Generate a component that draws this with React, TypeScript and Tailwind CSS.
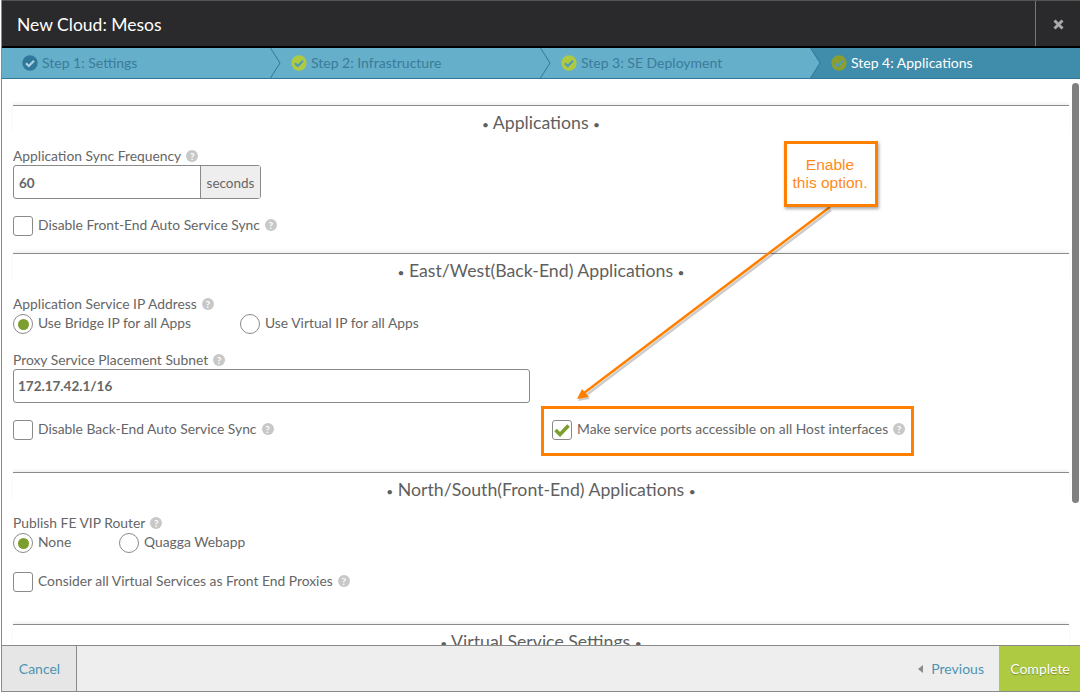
import type { ReactNode } from 'react';

const steps = [
  { label: 'Step 1: Settings', circle: '#2f7899', check: '#a9d3e4', pad: 'pl-[20px]' },
  { label: 'Step 2: Infrastructure', circle: '#aec942', check: '#4f9cba', pad: 'pl-[20px]' },
  { label: 'Step 3: SE Deployment', circle: '#aec942', check: '#4f9cba', pad: 'pl-[20px]' },
];

function StepIcon({ circle, check }: { circle: string; check: string }) {
  return (
    <svg width="16" height="16" viewBox="0 0 16 16" className="shrink-0">
      <circle cx="8" cy="8" r="7.7" fill={circle} />
      <path d="M4 8.2l2.8 2.8L12 5.8" fill="none" stroke={check} strokeWidth="2.2" />
    </svg>
  );
}

function Chevron({ filled }: { filled?: boolean }) {
  return (
    <svg width="12" height="30" viewBox="0 0 12 30" className="absolute right-[-11px] top-0 z-10">
      <path d="M0.5 0L10 15L0.5 30" fill={filled ? '#66afcb' : 'none'} stroke="#2f7899" strokeWidth="1" />
    </svg>
  );
}

function Help() {
  return (
    <span className="ml-[5px] inline-flex h-[12px] w-[12px] items-center justify-center rounded-full bg-[#c8c8c8] text-[10px] font-bold leading-none text-white">
      ?
    </span>
  );
}

function Section({ title, className, children }: { title: string; className: string; children?: ReactNode }) {
  return (
    <section className={className}>
      <div className="border-t border-[#8a8a8a] shadow-[0_-2px_3px_rgba(0,0,0,0.06)]">
        <h2 className="pt-[6px] text-center text-[17.7px] leading-[22px] text-[#5f5f5f]">
          <span className="text-[12px] leading-none">•</span> {title} <span className="text-[12px] leading-none">•</span>
        </h2>
      </div>
      {children}
    </section>
  );
}

function Checkbox({ label, checked }: { label: string; checked?: boolean }) {
  return (
    <label className="flex h-[20px] items-center text-[13.85px] text-[#666]">
      <span className="mr-[5px] flex h-[20px] w-[20px] shrink-0 items-center justify-center rounded-[3px] border border-[#8a8a8a] bg-white">
        {checked && (
          <svg width="16" height="14" viewBox="0 0 16 14">
            <path d="M1.5 7L6 11.5L14.5 2.5" fill="none" stroke="#7b9e2e" strokeWidth="3.6" />
          </svg>
        )}
      </span>
      <span className="flex items-center pb-[2px]">
        {label}
        <Help />
      </span>
    </label>
  );
}

function Radio({ label, checked, className }: { label: string; checked?: boolean; className?: string }) {
  return (
    <label className={`flex h-[20px] items-center text-[13.85px] text-[#666] ${className ?? ''}`}>
      <span className="mr-[5px] flex h-[20px] w-[20px] shrink-0 items-center justify-center rounded-full border border-[#8a8a8a] bg-white">
        {checked && <span className="h-[11px] w-[11px] rounded-full bg-[#7b9e2e]" />}
      </span>
      <span className="pb-[2px]">{label}</span>
    </label>
  );
}

function FieldLabel({ children }: { children: ReactNode }) {
  return (
    <div className="flex h-[18px] items-center text-[13.85px] leading-[18px] text-[#666]">
      {children}
      <Help />
    </div>
  );
}

export default function App() {
  return (
    <div className="relative h-[693px] w-[1080px] overflow-hidden bg-white pl-[1px] font-['Lato','Open_Sans',sans-serif]">
      <div className="flex h-[692px] flex-col border-b border-l border-[#8a8a8a]">
        {/* header */}
        <header className="flex h-[48px] shrink-0 items-stretch border-t border-[#555] border-b-2 border-b-black bg-[#2a2a2c]">
          <h1 className="flex-1 pl-[15px] pt-[12px] text-[17.5px] leading-[24px] text-white">New Cloud: Mesos</h1>
          <div className="flex w-[45px] items-center justify-center border-l border-[#777] pt-[2px]">
            <svg width="11" height="11" viewBox="0 0 11 11">
              <path d="M1.5 1.5L9.5 9.5M9.5 1.5L1.5 9.5" stroke="#a9a9a9" strokeWidth="3" />
            </svg>
          </div>
        </header>

        {/* steps */}
        <nav className="flex h-[31px] shrink-0 border-b border-[#2f7899] bg-[#66afcb] text-[14px]">
          {steps.map((s, i) => (
            <div
              key={s.label}
              className={`relative flex h-[30px] items-center gap-[4px] ${i === 0 ? 'w-[269px]' : 'w-[270px]'} ${s.pad} text-[#3a7c99]`}
            >
              <StepIcon circle={s.circle} check={s.check} />
              <span className="pb-[2px]">{s.label}</span>
              <Chevron filled={i === 2} />
            </div>
          ))}
          <div className="flex h-[30px] flex-1 items-center gap-[4px] bg-[#3f8cab] pl-[20px] text-white">
            <StepIcon circle="#8a9f30" check="#4f9cba" />
            <span className="pb-[2px]">Step 4: Applications</span>
          </div>
        </nav>

        {/* body */}
        <main className="relative flex-1 overflow-hidden pl-[11px] pr-[11px] pt-[26px]">
          <Section title="Applications" className="h-[148px]">
            <div className="pt-[13px]">
              <FieldLabel>Application Sync Frequency</FieldLabel>
              <div className="flex h-[34px] w-[248px] rounded-[3px] border border-[#8a8a8a]">
                <div className="flex-1 pl-[5px] text-[13.5px] font-bold leading-[34px] text-[#666]">60</div>
                <div className="w-[60px] border-l border-[#8a8a8a] bg-[#eee] text-center text-[13.5px] leading-[34px] text-[#666]">seconds</div>
              </div>
              <div className="mt-[17px]">
                <Checkbox label="Disable Front-End Auto Service Sync" />
              </div>
            </div>
          </Section>

          <Section title="East/West(Back-End) Applications" className="h-[219px]">
            <div className="pt-[13px]">
              <FieldLabel>Application Service IP Address</FieldLabel>
              <div className="mt-[1px] flex">
                <Radio label="Use Bridge IP for all Apps" checked className="w-[227px]" />
                <Radio label="Use Virtual IP for all Apps" />
              </div>
              <div className="mt-[17px]">
                <FieldLabel>Proxy Service Placement Subnet</FieldLabel>
              </div>
              <div className="h-[34px] w-[517px] rounded-[3px] border border-[#8a8a8a] pl-[4px] text-[13.5px] font-bold leading-[33px] text-[#666]">
                172.17.42.1/16
              </div>
              <div className="mt-[17px] grid grid-cols-[539px_1fr]">
                <Checkbox label="Disable Back-End Auto Service Sync" />
                <Checkbox label="Make service ports accessible on all Host interfaces" checked />
              </div>
            </div>
          </Section>

          <Section title="North/South(Front-End) Applications" className="h-[152px]">
            <div className="pt-[13px]">
              <FieldLabel>Publish FE VIP Router</FieldLabel>
              <div className="mt-[1px] flex">
                <Radio label="None" checked className="w-[106px]" />
                <Radio label="Quagga Webapp" />
              </div>
              <div className="mt-[19px]">
                <Checkbox label="Consider all Virtual Services as Front End Proxies" />
              </div>
            </div>
          </Section>

          <Section title="Virtual Service Settings" className="h-[40px]" />

          {/* scrollbar */}
          <div className="absolute right-[1px] top-[4px] h-[420px] w-[7px] rounded-full bg-[#808080]" />
        </main>

        {/* footer */}
        <footer className="flex h-[46px] shrink-0 items-stretch border-t border-[#8a8a8a] bg-[#eee] text-[14px]">
          <button className="w-[75px] border-r border-[#8a8a8a] bg-[#e6e6e6] pl-[1px] text-[#4d94b3]">Cancel</button>
          <div className="flex-1" />
          <div className="flex items-center pr-[15px] text-[#4d94b3]">
            <svg width="5" height="8" viewBox="0 0 5 8" className="mr-[8px]">
              <path d="M5 0L0 4L5 8Z" fill="#8a8a8a" />
            </svg>
            Previous
          </div>
          <button className="w-[81px] bg-[#aec942] pl-[1px] text-white [text-shadow:0_1px_1px_rgba(0,0,0,0.3)]">Complete</button>
        </footer>
      </div>

      {/* annotation overlays */}
      <svg width="1080" height="693" className="pointer-events-none absolute left-0 top-0">
        <path d="M830 208L584 394" stroke="#000" strokeOpacity="0.2" strokeWidth="2.5" transform="translate(1 2)" />
        <path d="M577 399L582 389L589 397Z" fill="#000" fillOpacity="0.2" transform="translate(1 2)" />
        <path d="M830 207L584 393" stroke="#ff8000" strokeWidth="2.5" />
        <path d="M577 399L582 389L589 397Z" fill="#ff8000" />
      </svg>
      <div className="absolute left-[784px] top-[141px] flex h-[66px] w-[94px] items-center justify-center border-[3px] border-[#ff8000] bg-white pr-[2px] text-center font-['Liberation_Sans',sans-serif] text-[15.5px] leading-[18px] text-[#ff8a1a] shadow-[1px_2px_3px_rgba(0,0,0,0.35)]">
        Enable
        <br />
        this option.
      </div>
      <div className="absolute left-[541px] top-[406px] h-[50px] w-[373px] border-[3px] border-[#ff8000]" />
    </div>
  );
}
